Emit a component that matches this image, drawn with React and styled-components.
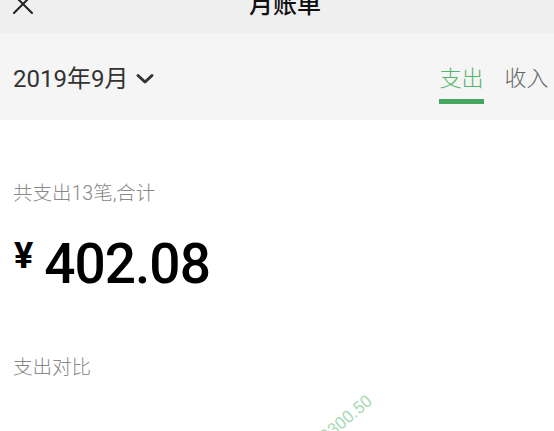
import React from 'react'
import styled, { createGlobalStyle } from 'styled-components';

const GlobalStyle = createGlobalStyle`
    html, body {
        margin:0;
        padding:0;
        background:#fff;
        overflow:hidden;
    }
    body {
        font-family:Roboto, "Noto Sans CJK SC", sans-serif;
    }
`;

function App() {
    const tabs = [
        { label: "支出", active: true },
        { label: "收入", active: false },
    ];
    return (
        <Page>
            <GlobalStyle />
            <NavBar>
                <NavInner>
                    <CloseButton>
                        <svg width="20" height="20" viewBox="0 0 20 20">
                            <path d="M1 1 L19 19 M19 1 L1 19" stroke="#222" strokeWidth="2" strokeLinecap="round" fill="none" />
                        </svg>
                    </CloseButton>
                    <Title>月账单</Title>
                    <span />
                </NavInner>
            </NavBar>
            <FilterBar>
                <DatePicker>
                    2019年9月
                    <svg width="20" height="12" viewBox="0 0 20 12">
                        <path d="M3 2.5 L10 9 L17 2.5" stroke="#333" strokeWidth="3" strokeLinecap="round" strokeLinejoin="round" fill="none" />
                    </svg>
                </DatePicker>
                <Tabs>
                    {tabs.map((tab) => (
                        <Tab key={tab.label}>
                            <TabLabel active={tab.active}>{tab.label}</TabLabel>
                            <TabLine active={tab.active} />
                        </Tab>
                    ))}
                </Tabs>
            </FilterBar>
            <Content>
                <Summary>共支出13笔,合计</Summary>
                <Amount>
                    <Currency>¥</Currency>
                    <Total>402.08</Total>
                </Amount>
                <SectionTitle>支出对比</SectionTitle>
                <Chart>
                    <BarLabel>2300.50</BarLabel>
                </Chart>
            </Content>
        </Page>
    )
};

const Page = styled.div`
    width:554px;
    height:431px;
    overflow:hidden;
    background:#fff;
`;
const NavBar = styled.div`
    height:33px;
    background:#efefef;
    overflow:hidden;
`;
const NavInner = styled.div`
    display:grid;
    grid-template-columns:1fr auto 1fr;
    align-items:center;
    height:24px;
    margin-top:-11px;
    padding:0 13px;
`;
const CloseButton = styled.div`
    display:flex;
    align-items:center;
    margin-top:1px;
`;
const Title = styled.div`
    font-size:24px;
    line-height:24px;
    font-weight:500;
    color:#111;
    padding-left:16px;
    margin-top:4px;
`;
const FilterBar = styled.div`
    display:flex;
    justify-content:space-between;
    align-items:flex-start;
    height:87px;
    box-sizing:border-box;
    padding:31px 5px 0 13px;
    background:#f5f5f5;
`;
const DatePicker = styled.div`
    display:flex;
    align-items:center;
    gap:7px;
    font-size:24px;
    line-height:30px;
    color:#333;
`;
const Tabs = styled.div`
    display:flex;
    gap:20px;
`;
const Tab = styled.div`
    display:flex;
    flex-direction:column;
    align-items:center;
    width:45px;
`;
const TabLabel = styled.span`
    font-size:22px;
    line-height:30px;
    font-weight:300;
    color:${(p) => (p.active ? "#52b36b" : "#666")};
`;
const TabLine = styled.div`
    width:100%;
    height:5px;
    margin-top:5px;
    background:${(p) => (p.active ? "#46a660" : "transparent")};
`;
const Content = styled.div`
    padding:61px 13px 0;
`;
const Summary = styled.div`
    font-size:19.5px;
    line-height:26px;
    font-weight:300;
    color:#888;
`;
const Amount = styled.div`
    display:flex;
    align-items:flex-start;
    gap:11px;
    margin-top:29px;
    color:#000;
`;
const Currency = styled.span`
    font-size:36px;
    line-height:36px;
    font-weight:700;
    margin-top:2px;
    margin-left:1px;
`;
const Total = styled.span`
    font-size:55px;
    line-height:56px;
    font-weight:500;
    letter-spacing:-1px;
`;
const SectionTitle = styled.div`
    margin-top:63px;
    font-size:19.5px;
    line-height:26px;
    font-weight:300;
    color:#888;
`;
const Chart = styled.div`
    position:relative;
    height:60px;
`;
const BarLabel = styled.span`
    position:absolute;
    left:315px;
    top:47px;
    font-size:17px;
    line-height:17px;
    color:#a9dcb6;
    transform-origin:left bottom;
    transform:rotate(-40deg);
    white-space:nowrap;
`;

export default App;
